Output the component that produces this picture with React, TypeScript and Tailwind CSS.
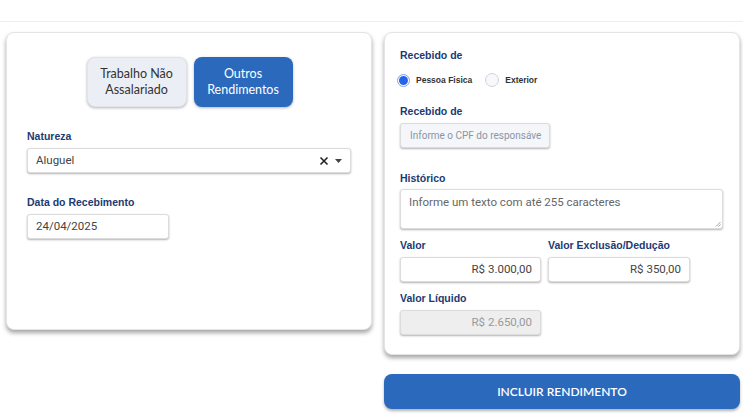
import React from "react";

const label = "block text-[10.5px] leading-[14px] font-bold text-[#1c3a73] [font-family:'Liberation_Sans',Arial,sans-serif]";
const base = "h-[25px] rounded-[3px] border border-[#dcdcdc] shadow-[0_1px_2px_rgba(0,0,0,0.3)] px-2 text-[11.5px] [font-family:Roboto,sans-serif] flex items-center";
const input = `${base} bg-white text-[#444]`;

export default function App() {
  return (
    <div className="w-[743px] h-[417px] bg-white overflow-hidden">
      <div className="h-[22px] border-b border-[#eeeeee]" />
      <div className="grid grid-cols-[366px_356px] gap-x-3 pl-[6px] pt-[10px] items-start">
        {/* left card */}
        <div className="h-[298px] rounded-lg border border-[#e3e3e8] bg-white shadow-[0_3px_4px_rgba(0,0,0,0.35)] pt-[24px] px-[20px]">
          <div className="flex justify-center gap-[7px] pl-[1px]">
            <div className="w-[100px] h-[50px] rounded-lg bg-[#ebeef5] border border-[#e0e3ea] shadow-[0_1px_3px_rgba(0,0,0,0.3)] flex items-center justify-center text-center text-[12.5px] leading-[16px] text-[#333] [font-family:Lato,sans-serif]">
              Trabalho Não<br />Assalariado
            </div>
            <div className="w-[99px] h-[50px] rounded-lg bg-[#2b69bd] shadow-[0_1px_3px_rgba(0,0,0,0.3)] flex items-center justify-center text-center text-[12.5px] leading-[16px] text-white [font-family:Lato,sans-serif]">
              Outros<br />Rendimentos
            </div>
          </div>
          <div className="mt-[22px]">
            <span className={label}>Natureza</span>
            <div className={`${input} mt-[5px] w-[324px] justify-between pr-2`}>
              <span>Aluguel</span>
              <span className="flex items-center gap-[6px] text-[#222]">
                <svg width="10" height="10" viewBox="0 0 10 10"><path d="M1.5 1.5 L8.5 8.5 M8.5 1.5 L1.5 8.5" stroke="#222" strokeWidth="1.6" /></svg>
                <svg width="7" height="4" viewBox="0 0 7 4"><path d="M0 0 L7 0 L3.5 4Z" fill="#444" /></svg>
              </span>
            </div>
          </div>
          <div className="mt-[22px]">
            <span className={label}>Data do Recebimento</span>
            <div className={`${input} mt-[5px] w-[142px]`}>24/04/2025</div>
          </div>
        </div>

        {/* right column */}
        <div className="flex flex-col">
          <div className="h-[323px] rounded-lg border border-[#e3e3e8] bg-white shadow-[0_3px_4px_rgba(0,0,0,0.35)] pt-[15px] px-[15px]">
            <span className={label}>Recebido de</span>
            <div className="mt-[11px] flex items-center gap-[6px] text-[8.5px] text-[#333] font-bold [font-family:'Liberation_Sans',Arial,sans-serif] -ml-[3px]">
              <span className="w-[13px] h-[13px] rounded-full border border-[#7aa2f5] flex items-center justify-center">
                <span className="w-[9px] h-[9px] rounded-full bg-[#2563eb]" />
              </span>
              <span>Pessoa Fisica</span>
              <span className="ml-[7px] w-[14px] h-[14px] rounded-full border border-[#d0d3da] bg-[#f7f8fa]" />
              <span>Exterior</span>
            </div>
            <div className="mt-[17px]">
              <span className={label}>Recebido de</span>
              <div className="mt-[5px] h-[25px] w-[150px] rounded-[3px] border border-[#dcdcdc] shadow-[0_1px_2px_rgba(0,0,0,0.3)] bg-[#f4f6f9] text-[#8a95a5] text-[10px] pl-[9px] [font-family:Roboto,sans-serif] flex items-center overflow-hidden whitespace-nowrap">Informe o CPF do responsáve</div>
            </div>
            <div className="mt-[23px]">
              <span className={label}>Histórico</span>
              <div className={`${input} mt-[4px] w-[323px] h-[40px] items-start pt-[4px] relative text-[#666]`}>
                Informe um texto com até 255 caracteres
                <svg className="absolute right-[1px] bottom-[1px]" width="6" height="6" viewBox="0 0 6 6"><path d="M5.5 1 L1 5.5 M5.5 3.5 L3.5 5.5" stroke="#888" strokeWidth="0.8" /></svg>
              </div>
            </div>
            <div className="mt-[9px] grid grid-cols-[141px_142px] gap-x-[7px]">
              <div>
                <span className={label}>Valor</span>
                <div className={`${input} mt-[5px] justify-end`}>R$ 3.000,00</div>
              </div>
              <div>
                <span className={label}>Valor Exclusão/Dedução</span>
                <div className={`${input} mt-[5px] justify-end`}>R$ 350,00</div>
              </div>
            </div>
            <div className="mt-[9px]">
              <span className={label}>Valor Líquido</span>
              <div className={`${base} mt-[5px] w-[141px] justify-end bg-[#eeeeee] text-[#999]`}>R$ 2.650,00</div>
            </div>
          </div>
          <div className="mt-[19px] h-[35px] rounded-lg bg-[#2b69bd] shadow-[0_2px_3px_rgba(0,0,0,0.3)] flex items-center justify-center text-white text-[12px] font-semibold [font-family:Lato,sans-serif]">
            INCLUIR RENDIMENTO
          </div>
        </div>
      </div>
    </div>
  );
}
